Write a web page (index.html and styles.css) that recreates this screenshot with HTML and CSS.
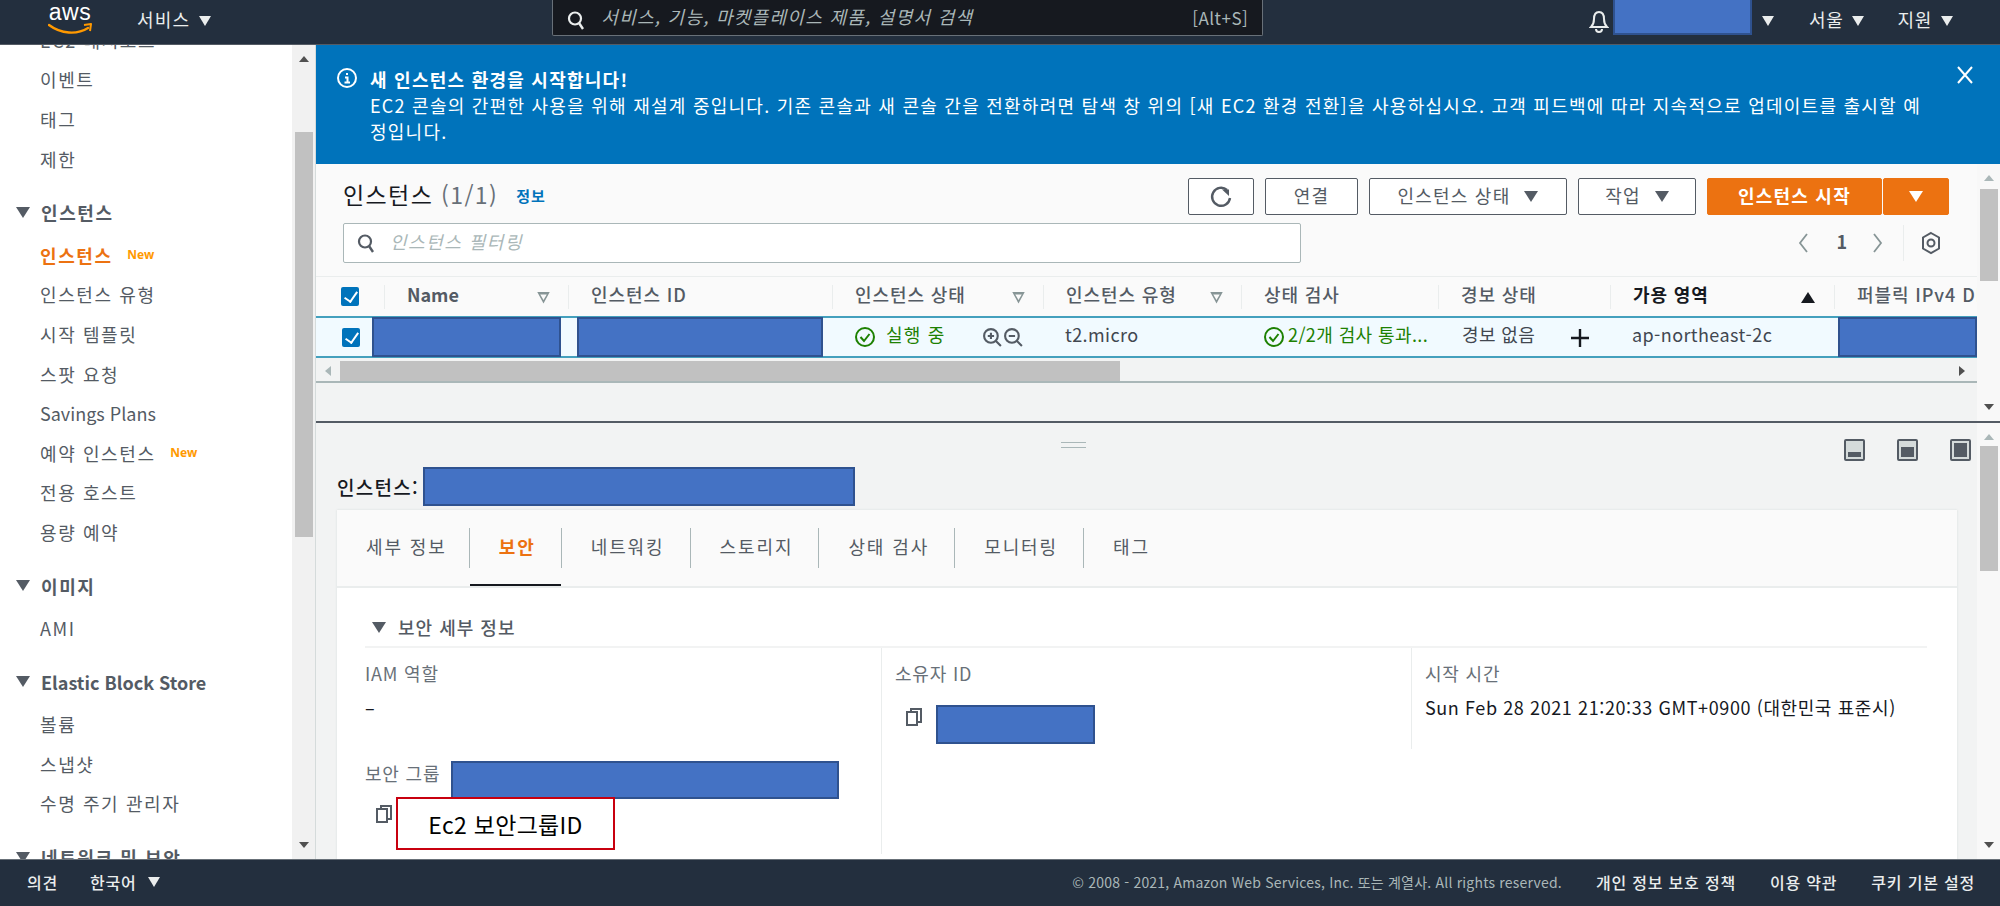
FILE: index.html
```html
<!DOCTYPE html>
<html lang="ko">

    <head>
        <meta charset="UTF-8">
        <meta name="viewport" content="width=device-width, initial-scale=1.0">
        <title>인스턴스 | EC2 Management Console</title>
        <link rel="stylesheet" href="styles.css">
    </head>

    <body>
        <header class="topbar">
            <div class="logo">
                <span class="logo-text">aws</span>
                <svg class="logo-smile" viewBox="0 0 44 12" width="44" height="12">
                    <path d="M1 2c12 9 28 10 39 3" fill="none" stroke="#f90" stroke-width="2.4" stroke-linecap="round"/>
                    <path d="M36 2l7-1-1 7" fill="none" stroke="#f90" stroke-width="2" stroke-linejoin="round"/>
                </svg>
            </div>
            <span class="top-link services">서비스</span>
            <span class="caret caret-light"></span>
            <div class="search">
                <svg class="search-icon" viewBox="0 0 18 20" width="18" height="20">
                    <circle cx="8" cy="8.5" r="6" fill="none" stroke="#eaeded" stroke-width="2.2"/>
                    <path d="M12 13l4 6" stroke="#eaeded" stroke-width="2.4"/>
                </svg>
                <span class="search-text">서비스, 기능, 마켓플레이스 제품, 설명서 검색</span>
                <span class="search-key">[Alt+S]</span>
            </div>
            <div class="top-right">
                <svg class="bell" viewBox="0 0 20 24" width="20" height="24">
                    <path d="M10 2c-4 0-5 3-5 7 0 4-1 6-3 8h16c-2-2-3-4-3-8 0-4-1-7-5-7zM7 19c0 4 6 4 6 0" fill="none" stroke="#eaeded" stroke-width="2"/>
                </svg>
                <div class="redact redact-account"></div>
                <span class="caret caret-light caret-account"></span>
                <span class="top-link">서울</span>
                <span class="caret caret-light"></span>
                <span class="top-link support">지원</span>
                <span class="caret caret-light"></span>
            </div>
        </header>

        <div class="console">
            <aside class="nav">
                <ul class="nav-list">
                    <li class="nav-item">EC2 대시보드 <span class="new">New</span></li>
                    <li class="nav-item">이벤트</li>
                    <li class="nav-item">태그</li>
                    <li class="nav-item">제한</li>
                    <li class="nav-head"><span class="caret"></span>인스턴스</li>
                    <li class="nav-item active">인스턴스 <span class="new">New</span></li>
                    <li class="nav-item">인스턴스 유형</li>
                    <li class="nav-item">시작 템플릿</li>
                    <li class="nav-item">스팟 요청</li>
                    <li class="nav-item nav-latin">Savings Plans</li>
                    <li class="nav-item">예약 인스턴스 <span class="new">New</span></li>
                    <li class="nav-item">전용 호스트</li>
                    <li class="nav-item">용량 예약</li>
                    <li class="nav-head"><span class="caret"></span>이미지</li>
                    <li class="nav-item">AMI</li>
                    <li class="nav-head nav-latin"><span class="caret"></span>Elastic Block Store</li>
                    <li class="nav-item">볼륨</li>
                    <li class="nav-item">스냅샷</li>
                    <li class="nav-item">수명 주기 관리자</li>
                    <li class="nav-head"><span class="caret"></span>네트워크 및 보안</li>
                </ul>
            </aside>
            <div class="vscroll nav-scroll">
                <span class="arrow-up"></span>
                <span class="thumb"></span>
                <span class="arrow-down"></span>
            </div>

            <main class="main">
                <section class="banner">
                    <svg class="banner-icon" viewBox="0 0 22 22" width="22" height="22">
                        <circle cx="11" cy="11" r="9" fill="none" stroke="#fff" stroke-width="2"/>
                        <path d="M11 6v2M9 10.500h2.500v5M8.500 15.500h5.500" fill="none" stroke="#fff" stroke-width="2"/>
                    </svg>
                    <div class="banner-text">
                        <strong>새 인스턴스 환경을 시작합니다!</strong>
                        <p>EC2 콘솔의 간편한 사용을 위해 재설계 중입니다. 기존 콘솔과 새 콘솔 간을 전환하려면 탐색 창 위의 [새 EC2 환경 전환]을 사용하십시오. 고객 피드백에 따라 지속적으로 업데이트를 출시할 예정입니다.</p>
                    </div>
                    <svg class="banner-close" viewBox="0 0 18 18" width="18" height="18">
                        <path d="M2 1l14 16M16 1L2 17" stroke="#fff" stroke-width="2"/>
                    </svg>
                </section>

                <section class="upper">
                    <div class="pane">
                        <div class="panel-head">
                            <div class="title-row">
                                <h1 class="panel-title">인스턴스 <span class="count">(1/1)</span></h1>
                                <a class="info">정보</a>
                                <div class="actions">
                                    <button class="btn btn-refresh" type="button">
                                        <svg viewBox="0 0 24 24" width="24" height="24">
                                            <path d="M18 5a9 9 0 1 0 3 8" fill="none" stroke="#545b64" stroke-width="2.400"/>
                                            <path d="M13 4.500h7V11z" fill="#545b64"/>
                                        </svg>
                                    </button>
                                    <button class="btn btn-connect" type="button"><span>연결</span></button>
                                    <button class="btn btn-state" type="button"><span>인스턴스 상태</span><i class="caret"></i></button>
                                    <button class="btn btn-action" type="button"><span>작업</span><i class="caret"></i></button>
                                    <div class="split">
                                        <button class="btn btn-primary btn-launch" type="button"><span>인스턴스 시작</span></button>
                                        <button class="btn btn-primary btn-more" type="button"><i class="caret caret-white"></i></button>
                                    </div>
                                </div>
                            </div>
                            <div class="filter-row">
                                <div class="filter">
                                    <svg viewBox="0 0 18 20" width="18" height="20">
                                        <circle cx="8" cy="8.500" r="6" fill="none" stroke="#545b64" stroke-width="2.200"/>
                                        <path d="M12 13l4 6" stroke="#545b64" stroke-width="2.400"/>
                                    </svg>
                                    <span class="filter-text">인스턴스 필터링</span>
                                </div>
                                <div class="pager">
                                    <svg viewBox="0 0 12 22" width="12" height="22"><path d="M10 2L3 11l7 9" fill="none" stroke="#879596" stroke-width="1.800"/></svg>
                                    <span class="page-no">1</span>
                                    <svg viewBox="0 0 12 22" width="12" height="22"><path d="M2 2l7 9-7 9" fill="none" stroke="#879596" stroke-width="1.800"/></svg>
                                    <span class="pager-line"></span>
                                    <svg viewBox="0 0 22 24" width="22" height="24">
                                        <path d="M11 2l8 4.500v11L11 22l-8-4.500v-11z" fill="none" stroke="#545b64" stroke-width="2"/>
                                        <circle cx="11" cy="12" r="3.500" fill="none" stroke="#545b64" stroke-width="2"/>
                                    </svg>
                                </div>
                            </div>
                        </div>

                        <div class="table-wrap">
                            <div class="table-row table-head">
                                <div class="cell cell-check"><span class="check"></span></div>
                                <div class="cell strong-name">Name<span class="tri"></span></div>
                                <div class="cell">인스턴스 ID</div>
                                <div class="cell">인스턴스 상태<span class="tri"></span></div>
                                <div class="cell">인스턴스 유형<span class="tri"></span></div>
                                <div class="cell">상태 검사</div>
                                <div class="cell">경보 상태</div>
                                <div class="cell sorted">가용 영역<span class="sort-up"></span></div>
                                <div class="cell clip">퍼블릭 IPv4 DNS</div>
                            </div>
                            <div class="table-row table-body">
                                <div class="cell cell-check"><span class="check"></span></div>
                                <div class="cell"><div class="redact redact-name"></div></div>
                                <div class="cell"><div class="redact redact-id"></div></div>
                                <div class="cell cell-text status status-run">
                                    <svg class="ok" viewBox="0 0 22 22" width="22" height="22">
                                        <circle cx="11" cy="11" r="9" fill="none" stroke="#1d8102" stroke-width="2"/>
                                        <path d="M6.500 11l3.500 4 5.500-7" fill="none" stroke="#1d8102" stroke-width="2"/>
                                    </svg>
                                    실행 중
                                    <span class="zooms">
                                        <svg viewBox="0 0 20 20" width="21" height="21">
                                            <circle cx="8.500" cy="8.500" r="6.500" fill="none" stroke="#545b64" stroke-width="2"/>
                                            <path d="M13 13l5 5M5.500 8.500h6M8.500 5.500v6" stroke="#545b64" stroke-width="2"/>
                                        </svg>
                                        <svg viewBox="0 0 20 20" width="21" height="21">
                                            <circle cx="8.500" cy="8.500" r="6.500" fill="none" stroke="#545b64" stroke-width="2"/>
                                            <path d="M13 13l5 5M5.500 8.500h6" stroke="#545b64" stroke-width="2"/>
                                        </svg>
                                    </span>
                                </div>
                                <div class="cell cell-text">t2.micro</div>
                                <div class="cell cell-text status status-check">
                                    <svg class="ok" viewBox="0 0 22 22" width="22" height="22">
                                        <circle cx="11" cy="11" r="9" fill="none" stroke="#1d8102" stroke-width="2"/>
                                        <path d="M6.500 11l3.500 4 5.500-7" fill="none" stroke="#1d8102" stroke-width="2"/>
                                    </svg>
                                    2/2개 검사 통과...
                                </div>
                                <div class="cell cell-text alarm">경보 없음
                                    <svg class="plus" viewBox="0 0 20 20" width="20" height="20">
                                        <path d="M10 1v18M1 10h18" stroke="#16191f" stroke-width="2.400"/>
                                    </svg>
                                </div>
                                <div class="cell cell-text">ap-northeast-2c</div>
                                <div class="cell cell-last"><div class="redact redact-ip"></div></div>
                            </div>
                            <div class="hscroll">
                                <span class="arrow-left"></span>
                                <span class="hthumb"></span>
                                <span class="arrow-right"></span>
                            </div>
                        </div>
                    </div>
                    <div class="vscroll main-scroll">
                        <span class="arrow-up"></span>
                        <span class="thumb"></span>
                        <span class="arrow-down"></span>
                    </div>
                </section>

                <section class="lower">
                    <div class="pane">
                        <div class="split-tools">
                            <span class="handle"></span>
                            <span class="pane-icon pane-low"></span>
                            <span class="pane-icon pane-mid"></span>
                            <span class="pane-icon pane-full"></span>
                        </div>
                        <div class="detail-title">
                            <h2>인스턴스:</h2>
                            <div class="redact redact-title"></div>
                        </div>

                        <div class="card">
                            <nav class="tabs">
                                <a class="tab">세부 정보</a>
                                <a class="tab tab-active">보안</a>
                                <a class="tab">네트워킹</a>
                                <a class="tab">스토리지</a>
                                <a class="tab">상태 검사</a>
                                <a class="tab">모니터링</a>
                                <a class="tab">태그</a>
                            </nav>
                            <div class="card-body">
                                <h3 class="section-head"><span class="caret"></span>보안 세부 정보</h3>
                                <div class="columns">
                                    <div class="col col-role">
                                        <div class="label">IAM 역할</div>
                                        <div class="value">–</div>
                                        <div class="group-row">
                                            <div class="label">보안 그룹</div>
                                            <div class="redact redact-group"></div>
                                        </div>
                                        <div class="group-copy">
                                            <svg class="copy" viewBox="0 0 18 20" width="18" height="20">
                                                <path d="M6 5V2h10v13h-3" fill="none" stroke="#545b64" stroke-width="2"/>
                                                <path d="M2 5h10v13H2z" fill="none" stroke="#545b64" stroke-width="2"/>
                                            </svg>
                                            <div class="callout">Ec2 보안그룹ID</div>
                                        </div>
                                    </div>
                                    <div class="col col-owner">
                                        <div class="label">소유자 ID</div>
                                        <div class="owner-row">
                                            <svg class="copy" viewBox="0 0 18 20" width="18" height="20">
                                                <path d="M6 5V2h10v13h-3" fill="none" stroke="#545b64" stroke-width="2"/>
                                                <path d="M2 5h10v13H2z" fill="none" stroke="#545b64" stroke-width="2"/>
                                            </svg>
                                            <div class="redact redact-owner"></div>
                                        </div>
                                    </div>
                                    <div class="col col-time">
                                        <div class="label">시작 시간</div>
                                        <div class="value">Sun Feb 28 2021 21:20:33 GMT+0900 (대한민국 표준시)</div>
                                    </div>
                                </div>
                            </div>
                        </div>
                    </div>
                    <div class="vscroll detail-scroll">
                        <span class="arrow-up"></span>
                        <span class="thumb"></span>
                        <span class="arrow-down"></span>
                    </div>
                </section>
            </main>
        </div>

        <footer class="footer">
            <a class="foot-link feedback">의견</a>
            <a class="foot-link">한국어</a>
            <span class="caret caret-light"></span>
            <span class="copyright">© 2008 - 2021, Amazon Web Services, Inc. 또는 계열사. All rights reserved.</span>
            <a class="foot-link policy">개인 정보 보호 정책</a>
            <a class="foot-link policy">이용 약관</a>
            <a class="foot-link policy">쿠키 기본 설정</a>
        </footer>
    </body>

</html>
```

FILE: styles.css
```css
* {
    box-sizing: border-box;
}

body {
    margin: 0;
    height: 906px;
    overflow: hidden;
    display: flex;
    flex-direction: column;
    font-family: "Noto Sans CJK KR", "Noto Sans", sans-serif;
    font-size: 18px;
    color: #16191f;
    background: #f2f3f3;
}

h1, h2, h3, p, ul {
    margin: 0;
    padding: 0;
    font-weight: normal;
}

/* shared bits */
.caret {
    display: inline-block;
    width: 0;
    height: 0;
    border-left: 7px solid transparent;
    border-right: 7px solid transparent;
    border-top: 11px solid #545b64;
}

.caret-light {
    border-left-width: 6px;
    border-right-width: 6px;
    border-top: 10px solid #eaeded;
}

.caret-white {
    border-top-color: #fff;
}

.redact {
    background: #4472c4;
    border: 2px solid #2f528f;
}

/* top bar */
.topbar {
    flex: none;
    height: 45px;
    display: flex;
    align-items: center;
    padding-left: 48px;
    background: #232f3e;
    border-bottom: 1px solid #545b64;
    color: #eaeded;
}

.logo {
    width: 44px;
    height: 45px;
    display: flex;
    flex-direction: column;
    align-items: center;
}

.logo-text {
    font-family: "Liberation Sans", sans-serif;
    font-size: 23px;
    line-height: 21px;
    letter-spacing: 0.5px;
    margin-top: 2px;
    color: #fff;
}

.top-link {
    margin-top: -6px;
    letter-spacing: 0.7px;
}

.services {
    margin-left: 45px;
    margin-right: 9px;
    letter-spacing: 1.200px;
}

.topbar > .caret {
    margin-top: -3px;
}

.search {
    width: 711px;
    height: 36px;
    margin: -9px 0 0 341px;
    display: flex;
    align-items: center;
    padding: 0 14px;
    background: #16191f;
    border: 1px solid #687078;
    border-top: none;
    border-radius: 0 0 2px 2px;
}

.search-icon {
    margin-top: 5px;
}

.search-text {
    margin: -2px 0 0 16px;
    font-style: italic;
    color: #aab7b8;
    letter-spacing: 1.300px;
}

.search-key {
    margin-left: auto;
    color: #aab7b8;
    font-size: 17px;
    letter-spacing: 0.5px;
}

.top-right {
    margin-left: auto;
    padding-right: 47px;
    display: flex;
    align-items: center;
    height: 45px;
}

.bell {
    margin-right: 4px;
}

.redact-account {
    width: 139px;
    height: 35px;
    align-self: flex-start;
    border-width: 0 2px 2px;
}

.caret-account {
    margin: 0 35px 0 10px;
}

.top-right .caret {
    margin-top: -3px;
}

.top-right .top-link + .caret {
    margin-left: 9px;
}

.support {
    margin-left: 33px;
}

/* layout */
.console {
    flex: 1;
    display: flex;
    min-height: 0;
}

.nav {
    width: 292px;
    overflow: hidden;
    background: #fff;
}

.nav-list {
    list-style: none;
    margin-top: -25px;
}

.nav-item,
.nav-head {
    height: 39.6px;
    display: flex;
    align-items: center;
    white-space: pre;
    color: #545b64;
    letter-spacing: 1.600px;
}

.nav-item {
    padding-left: 40px;
}

.nav-head {
    padding-left: 16px;
    margin: 14px 0 3px;
    font-weight: 700;
}

.nav-head .caret {
    margin-right: 11px;
}

.nav-item.active {
    color: #ec7211;
    font-weight: 700;
}

.nav-latin {
    letter-spacing: 0;
}

.new {
    margin-left: 8px;
    font-family: "Noto Sans", sans-serif;
    font-size: 12px;
    font-weight: 700;
    color: #ff9900;
    letter-spacing: 0;
}

/* scrollbars */
.vscroll {
    flex: none;
    width: 23px;
    position: relative;
    display: flex;
    flex-direction: column;
    align-items: center;
    background: #f1f1f1;
}

.nav-scroll {
    width: 24px;
    border-right: 1px solid #d5dbdb;
}

.thumb {
    width: 18px;
    background: #c1c1c1;
}

.arrow-up,
.arrow-down {
    width: 0;
    height: 0;
    border-left: 5px solid transparent;
    border-right: 5px solid transparent;
}

.arrow-up {
    border-bottom: 6px solid #505050;
    margin-top: 11px;
}

.arrow-down {
    border-top: 6px solid #505050;
    margin-top: auto;
    margin-bottom: 11px;
}

.nav-scroll .thumb {
    height: 405px;
    margin-top: 70px;
}

.main-scroll,
.detail-scroll {
    background: #f8f8f8;
}

.main-scroll .arrow-up,
.detail-scroll .arrow-up {
    border-bottom-color: #aab7b8;
}

.main-scroll .thumb {
    height: 92px;
    margin-top: 8px;
}

.detail-scroll .thumb {
    height: 125px;
    margin-top: 6px;
}

/* main column */
.main {
    flex: 1;
    min-width: 0;
    display: flex;
    flex-direction: column;
}

.banner {
    flex: none;
    height: 119px;
    display: flex;
    align-items: flex-start;
    padding: 21px 26px 0 20px;
    background: #0073bb;
    color: #fff;
}

.banner-icon {
    flex: none;
    margin: 1px 12px 0 0;
}

.banner-text {
    width: 1552px;
    line-height: 26px;
    letter-spacing: 1.250px;
    word-break: break-all;
}

.banner-text strong {
    display: block;
    font-weight: 700;
}

.banner-close {
    margin: 0 0 0 auto;
}

.upper {
    flex: none;
    height: 259px;
    display: flex;
    border-bottom: 2px solid #545b64;
}

.lower {
    flex: 1;
    min-height: 0;
    display: flex;
}

.pane {
    flex: 1;
    min-width: 0;
    overflow: hidden;
}

.panel-head {
    height: 113px;
    padding: 14px 28px 0 27px;
    background: #fafafa;
    border-bottom: 1px solid #eaeded;
}

.title-row {
    display: flex;
    align-items: center;
    height: 37px;
}

.panel-title {
    margin-top: -6px;
    font-size: 23px;
    letter-spacing: 1.400px;
}

.count {
    color: #687078;
}

.info {
    margin: -2px 0 0 18px;
    font-size: 15px;
    font-weight: 700;
    letter-spacing: 1px;
    color: #0073bb;
}

.actions {
    margin-left: auto;
    display: flex;
    gap: 11px;
}

.btn {
    height: 37px;
    display: flex;
    align-items: center;
    justify-content: center;
    gap: 14px;
    padding: 0;
    font: inherit;
    letter-spacing: 1.200px;
    color: #545b64;
    background: #fff;
    border: 1px solid #545b64;
    border-radius: 2px;
}

.btn span {
    margin-top: -4px;
}

.btn-refresh { width: 66px; }
.btn-connect { width: 93px; }
.btn-state { width: 198px; }
.btn-action { width: 118px; }
.btn-launch { width: 175px; }
.btn-more { width: 66px; }

.split {
    display: flex;
    gap: 1px;
}

.btn-primary {
    color: #fff;
    font-weight: 700;
    background: #ec7211;
    border-color: #ec7211;
}

.filter-row {
    display: flex;
    align-items: center;
    margin-top: 8px;
}

.filter {
    width: 958px;
    height: 40px;
    display: flex;
    align-items: center;
    gap: 15px;
    padding-left: 13px;
    background: #fff;
    border: 1px solid #aab7b8;
    border-radius: 2px;
}

.filter-text {
    margin-top: -4px;
    font-style: italic;
    color: #aab7b8;
    letter-spacing: 1.500px;
}

.pager {
    margin-left: auto;
    padding-right: 7px;
    display: flex;
    align-items: center;
    height: 40px;
}

.page-no {
    margin: -4px 25px 0 27px;
    font-weight: 700;
    color: #545b64;
}

.pager-line {
    width: 1px;
    height: 36px;
    margin: 0 16px 0 19px;
    background: #eaeded;
}

/* table */
.table-row {
    display: grid;
    grid-template-columns: 68px 184px 264px 211px 198px 197px 172px 224px 143px;
    align-items: center;
}

.table-head {
    height: 39px;
    background: #fafafa;
    color: #545b64;
    letter-spacing: 0.9px;
}

.table-head .cell {
    position: relative;
    height: 24px;
    line-height: 19px;
    border-left: 1px solid #eaeded;
    font-weight: 500;
}

.table-head .cell-check {
    border-left: none;
}

.table-head .sorted {
    color: #16191f;
    font-weight: 700;
}

.table-head .strong-name {
    font-weight: 700;
    letter-spacing: 0;
}

.cell {
    padding-left: 22px;
    white-space: nowrap;
}

.cell-check {
    padding-left: 25px;
    display: flex;
    align-items: center;
}

.clip {
    overflow: hidden;
}

.check {
    width: 18px;
    height: 19px;
    position: relative;
    background: #0073bb;
    border-radius: 2px;
}

.check::after {
    content: "";
    position: absolute;
    left: 5.500px;
    top: 2px;
    width: 6px;
    height: 11px;
    border: solid #fff;
    border-width: 0 2.500px 2.500px 0;
    transform: rotate(35deg);
}

.tri {
    position: absolute;
    right: 18px;
    top: 7px;
    width: 13px;
    height: 12px;
    background: #879596;
    clip-path: polygon(0 0, 100% 0, 50% 100%, 0 0, 25% 25%, 50% 70%, 75% 25%, 25% 25%);
}

.sort-up {
    position: absolute;
    right: 19px;
    top: 7px;
    width: 0;
    height: 0;
    border-left: 7px solid transparent;
    border-right: 7px solid transparent;
    border-bottom: 11px solid #16191f;
}

.table-body {
    height: 42px;
    background: #f1faff;
    border-top: 2px solid #44a0bd;
    border-bottom: 2px solid #44a0bd;
    color: #414750;
    letter-spacing: 0.4px;
}

.table-body .cell {
    display: flex;
    align-items: center;
    height: 38px;
}

.table-body .cell-text {
    padding-bottom: 7px;
}

.table-body .cell-check {
    padding-left: 26px;
}

.redact-name {
    width: 189px;
    height: 40px;
    margin-left: -34px;
}

.redact-id {
    width: 246px;
    height: 40px;
    margin-left: -13px;
}

.redact-ip {
    width: 139px;
    height: 40px;
    margin-left: -18px;
}

.status {
    color: #1d8102;
}

.status .ok {
    flex: none;
    margin: 7px 3px 0 0;
}

.status-run {
    letter-spacing: 1.200px;
}

.status-run .ok {
    margin-right: 10px;
}

.zooms {
    margin: 7px 19px 0 auto;
    display: flex;
}

.plus {
    margin: 8px 20px 0 auto;
}

.alarm {
    padding-left: 24px;
}

.hscroll {
    height: 25px;
    padding-top: 2px;
    display: flex;
    align-items: center;
    border-bottom: 2px solid #aab7b8;
}

.hthumb {
    width: 780px;
    height: 20px;
    margin-left: 9px;
    background: #c1c1c1;
}

.arrow-left,
.arrow-right {
    width: 0;
    height: 0;
    border-top: 5px solid transparent;
    border-bottom: 5px solid transparent;
}

.arrow-left {
    margin-left: 9px;
    border-right: 6px solid #aab7b8;
}

.arrow-right {
    margin: 0 12px 0 auto;
    border-left: 6px solid #505050;
}

/* detail pane */
.split-tools {
    height: 44px;
    display: flex;
    align-items: center;
    padding: 0 6px 0 745px;
    gap: 32px;
}

.handle {
    width: 25px;
    height: 6px;
    margin-right: auto;
    border-top: 1px solid #aab7b8;
    border-bottom: 1px solid #aab7b8;
}

.pane-icon {
    width: 21px;
    height: 22px;
    margin-top: 9px;
    position: relative;
    background: #d5dbdb;
    border: 2px solid #545b64;
    border-radius: 2px;
}

.pane-icon::after {
    content: "";
    position: absolute;
    left: 2px;
    right: 2px;
    bottom: 2px;
    background: #545b64;
}

.pane-low::after { height: 5px; }
.pane-mid::after { height: 10px; }
.pane-full::after { height: 14px; }

.detail-title {
    display: flex;
    align-items: center;
    height: 39px;
    padding-left: 21px;
}

.detail-title h2 {
    width: 86px;
    font-size: 19px;
    font-weight: 500;
    letter-spacing: 1.300px;
    white-space: nowrap;
}

.redact-title {
    width: 432px;
    height: 39px;
}

.card {
    width: 1620px;
    height: 360px;
    margin: 4px 0 0 21px;
    background: #fff;
    box-shadow: 0 0 2px #d5dbdb;
}

.tabs {
    height: 78px;
    display: flex;
    align-items: center;
    background: #fafafa;
    border-bottom: 2px solid #eaeded;
    padding-left: 29px;
}

.tab {
    position: relative;
    padding: 0 25px 0 29px;
    height: 40px;
    line-height: 36px;
    color: #545b64;
    letter-spacing: 1.900px;
    border-right: 1px solid #aab7b8;
}

.tab:first-child {
    padding: 0 22px 0 0;
}

.tab:last-child {
    border-right: none;
}

.tab-active {
    color: #ec7211;
    font-weight: 700;
}

.tab-active::after {
    content: "";
    position: absolute;
    left: 0;
    right: 0;
    bottom: -18px;
    height: 2px;
    background: #16191f;
}

.card-body {
    padding: 0 30px 0 28px;
}

.section-head {
    height: 60px;
    display: flex;
    align-items: center;
    gap: 12px;
    padding: 20px 0 0 7px;
    color: #545b64;
    font-size: 18px;
    font-weight: 500;
    letter-spacing: 1px;
    border-bottom: 2px solid #f2f3f3;
}

.columns {
    display: grid;
    grid-template-columns: 516px 530px 1fr;
}

.col {
    height: 206px;
    padding-top: 13px;
}

.col-owner,
.col-time {
    padding-left: 13px;
    border-left: 1px solid #eaeded;
}

.col-time {
    height: 101px;
}

.label {
    height: 26px;
    line-height: 24px;
    color: #687078;
    letter-spacing: 0.8px;
}

.value {
    height: 26px;
    line-height: 25px;
    margin-top: 8px;
    white-space: nowrap;
    color: #16191f;
    letter-spacing: 0.6px;
}

.group-row {
    display: flex;
    align-items: flex-start;
    gap: 11px;
    margin-top: 40px;
}

.redact-group {
    width: 388px;
    height: 38px;
}

.group-copy {
    display: flex;
    align-items: flex-start;
    margin-top: -2px;
    padding-left: 10px;
}

.copy {
    flex: none;
    margin-top: 7px;
}

.callout {
    width: 219px;
    height: 53px;
    margin-left: 3px;
    display: flex;
    align-items: center;
    justify-content: center;
    position: relative;
    font-size: 23px;
    letter-spacing: 0.3px;
    color: #000;
    background: #fff;
    border: 2px solid #c8000f;
}

.owner-row {
    display: flex;
    align-items: flex-start;
    gap: 13px;
    margin-top: 18px;
    padding-left: 10px;
}

.owner-row .copy {
    margin-top: 2px;
}

.redact-owner {
    width: 159px;
    height: 39px;
}

/* footer */
.footer {
    flex: none;
    height: 47px;
    display: flex;
    align-items: center;
    padding: 0 0 3px 27px;
    background: #232f3e;
    border-top: 1px solid #687078;
}

.foot-link {
    font-size: 16px;
    font-weight: 500;
    color: #eaeded;
    letter-spacing: 0.8px;
}

.feedback {
    margin-right: 32px;
}

.footer .caret {
    margin-left: 11px;
}

.copyright {
    margin-left: auto;
    font-size: 14px;
    color: #aab7b8;
    letter-spacing: 0.2px;
}

.policy {
    margin-left: 34px;
}

.policy:last-child {
    margin-right: 25px;
}
```
